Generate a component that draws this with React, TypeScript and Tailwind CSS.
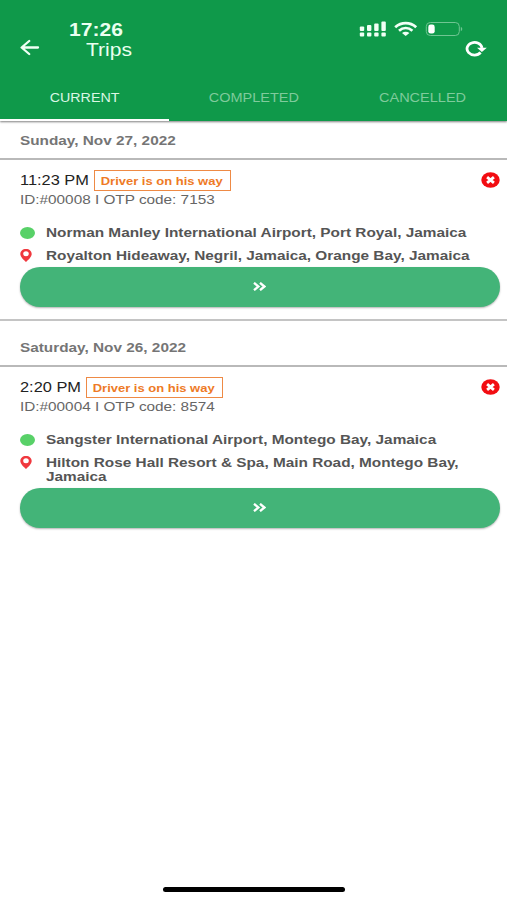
import React from 'react';

interface Trip {
    date: string;
    time: string;
    info: string;
    pickup: string;
    dropoff: string[];
}

const TRIPS: Trip[] = [
    {
        date: 'Sunday, Nov 27, 2022',
        time: '11:23 PM',
        info: 'ID:#00008 I OTP code: 7153',
        pickup: 'Norman Manley International Airport, Port Royal, Jamaica',
        dropoff: ['Royalton Hideaway, Negril, Jamaica, Orange Bay, Jamaica'],
    },
    {
        date: 'Saturday, Nov 26, 2022',
        time: '2:20 PM',
        info: 'ID:#00004 I OTP code: 8574',
        pickup: 'Sangster International Airport, Montego Bay, Jamaica',
        dropoff: ['Hilton Rose Hall Resort & Spa, Main Road, Montego Bay,', 'Jamaica'],
    },
];

const StatusIcons = () => (
    <svg width="104" height="16" viewBox="0 0 104 16" className="block" fill="#f0fff5">
        {/* Dual sim signal */}
        <rect x="0.8" y="5.5" width="4.4" height="4.6" rx="1" />
        <rect x="8" y="4" width="4.4" height="6.1" rx="1" />
        <rect x="15.2" y="2.4" width="4.4" height="7.7" rx="1" />
        <rect x="22.4" y="0.6" width="4.4" height="9.5" rx="1" />
        <rect x="0.8" y="11.6" width="4.4" height="3.8" rx="1" />
        <rect x="8" y="11.6" width="4.4" height="3.8" rx="1" />
        <rect x="15.2" y="11.6" width="4.4" height="3.8" rx="1" />
        <rect x="22.4" y="11.6" width="4.4" height="3.8" rx="1" />
        {/* Wifi */}
        <g fill="none" stroke="#f0fff5" strokeWidth="2.8">
            <path d="M36.2 6.2C42.4 0.7 51 0.7 57.2 6.2" />
            <path d="M40 9.7C44 6.3 49.4 6.3 53.4 9.7" />
        </g>
        <path d="M43 11.9C45.2 10.2 48.2 10.2 50.4 11.9L46.7 15Z" />
        {/* Battery */}
        <rect x="67.3" y="1.5" width="33" height="13" rx="4" fill="none" stroke="#6fc592" strokeWidth="1" />
        <path d="M101.8 5.8C103.8 6.8 103.8 9.2 101.8 10.2Z" fill="#6fc592" />
        <rect x="69.3" y="3.6" width="6.4" height="9" rx="2.4" fill="#ffffff" />
    </svg>
);

const Header = () => (
    <header className="h-[121px] bg-[#0f994a] shadow-[0_1px_2px_rgba(0,0,0,0.5)] flex flex-col">
        <div className="h-[39px] pt-[21px] pl-[69px] pr-[44px] flex justify-between">
            <span className="text-[18px] leading-[18px] font-bold text-[#eafff0] origin-left scale-x-[1.17]">17:26</span>
            <StatusIcons />
        </div>
        <div className="h-[38px] flex items-start">
            <svg width="20" height="18" viewBox="0 0 20 18" className="ml-5" fill="none" stroke="#f0fff5" strokeWidth="2.3" strokeLinecap="round" strokeLinejoin="round">
                <path d="M18 8.5H2M9.2 2L1.6 8.5L9.2 15" />
            </svg>
            <h1 className="ml-[46px] grow text-[18px] leading-[22px] text-[#eafff0] origin-left scale-x-[1.17]">Trips</h1>
            <svg width="22" height="18" viewBox="0 0 22 18" className="mr-5" fill="none" stroke="#ffffff" strokeWidth="2.8">
                <path d="M15.6 13.5A7.5 6.3 0 1 1 17 9" />
                <path d="M12 8.8H21.8L16.9 13Z" fill="#ffffff" stroke="none" />
            </svg>
        </div>
        <nav className="h-[44px] grid grid-cols-3 text-center text-[12.5px] leading-[42px] text-[#7fcb9c]">
            <div className="border-b-2 border-white text-[#dcf7e5]">
                <span className="inline-block scale-x-[1.14]">CURRENT</span>
            </div>
            <div>
                <span className="inline-block scale-x-[1.16]">COMPLETED</span>
            </div>
            <div>
                <span className="inline-block scale-x-[1.16]">CANCELLED</span>
            </div>
        </nav>
    </header>
);

const DateRow: React.FC<{ date: string; first: boolean }> = ({ date, first }) => (
    <div className={first ? 'h-[39px] pt-[12px] pl-5 border-b-2 border-[#b9b9b9]' : 'h-[46px] pt-[19px] pl-5 border-b-2 border-[#b9b9b9]'}>
        <span className="block text-[13px] leading-4 font-bold text-[#757575] origin-left scale-x-[1.18]">{date}</span>
    </div>
);

const TripCard: React.FC<{ trip: Trip; last: boolean }> = ({ trip, last }) => (
    <section className={last ? 'pl-5 pr-[7px] pt-[10px]' : 'pl-5 pr-[7px] pt-[10px] pb-3 border-b-2 border-[#c4c4c4]'}>
        <div className="h-[22px] flex items-start">
            <div className={trip.time.length > 7 ? 'w-[74px] shrink-0' : 'w-[66px] shrink-0'}>
                <span className="block whitespace-nowrap text-[14px] leading-[20px] text-[#222222] origin-left scale-x-[1.17]">{trip.time}</span>
            </div>
            <div className="w-[137px] h-[21px] border-[1.5px] border-[#ee8a45] text-center">
                <span className="inline-block whitespace-nowrap -ml-px text-[11px] leading-[20px] align-top font-bold text-[#ee7a26] scale-x-[1.18]">Driver is on his way</span>
            </div>
            <svg width="19" height="16" viewBox="0 0 19 16" className="ml-auto mt-[2px]">
                <ellipse cx="9.5" cy="8" rx="9.2" ry="7.8" fill="#f20d12" />
                <path d="M6.1 5.1L12.9 10.9M12.9 5.1L6.1 10.9" stroke="#ffffff" strokeWidth="2.8" />
            </svg>
        </div>
        <p className="text-[13px] leading-4 text-[#666666] origin-left scale-x-[1.178] whitespace-nowrap">{trip.info}</p>
        <div className="mt-[17px] h-4 flex items-center">
            <div className="w-[15px] h-3 rounded-[50%] bg-[#58d168]" />
            <span className="ml-[11px] whitespace-nowrap text-[13px] leading-4 font-bold text-[#555555] origin-left scale-x-[1.182]">{trip.pickup}</span>
        </div>
        <div className="mt-2 flex items-start">
            <svg width="12" height="13" viewBox="0 0 12 13" className="shrink-0">
                <path fillRule="evenodd" fill="#f0383e" d="M6 0C2.6 0 0.3 2.1 0.3 5C0.3 8 4 11 6 13C8 11 11.7 8 11.7 5C11.7 2.1 9.4 0 6 0ZM6 2.3A2.8 2.5 0 1 1 6 7.3A2.8 2.5 0 1 1 6 2.3Z" />
            </svg>
            <div className="ml-[14px] origin-left scale-x-[1.181] text-[13px] leading-[14.5px] font-bold text-[#555555] whitespace-nowrap">
                {trip.dropoff.map(line => (
                    <div key={line}>{line}</div>
                ))}
            </div>
        </div>
        <button className="mt-[3px] w-full h-10 rounded-full bg-[#43b478] shadow-[0_1px_2px_rgba(0,0,0,0.3)] flex items-center justify-center">
            <svg width="13" height="9" viewBox="0 0 13 9" className="-ml-0.5 -mt-px" fill="none" stroke="#ffffff" strokeWidth="2.3">
                <path d="M1 0.8L5.4 4.5L1 8.2M7 0.8L11.4 4.5L7 8.2" />
            </svg>
        </button>
    </section>
);

export default function App() {
    return (
        <div className="w-[507px] h-[900px] bg-white overflow-hidden flex flex-col font-['Liberation_Sans',Arial,sans-serif]">
            <Header />
            <main className="grow">
                {TRIPS.map((trip, i) => (
                    <React.Fragment key={trip.date}>
                        <DateRow date={trip.date} first={i === 0} />
                        <TripCard trip={trip} last={i === TRIPS.length - 1} />
                    </React.Fragment>
                ))}
            </main>
            <div className="mx-auto mb-[8px] w-[182px] h-[5px] rounded-full bg-black" />
        </div>
    );
}
